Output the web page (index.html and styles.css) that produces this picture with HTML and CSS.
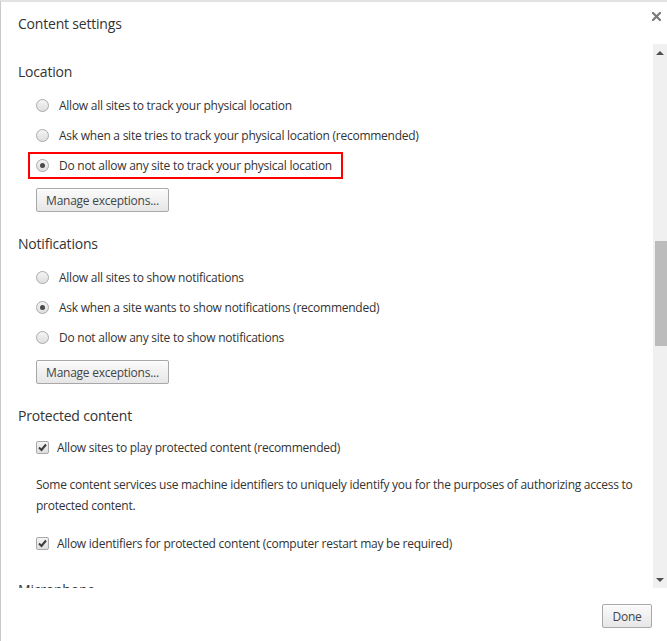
FILE: index.html
```html
<!DOCTYPE html>
<html lang="en">

<head>
    <meta charset="UTF-8">
    <meta name="viewport" content="width=device-width, initial-scale=1.0">
    <title>Content settings</title>

    <link rel="stylesheet" href="styles.css">
</head>

<body>
    <div class="dialog">
        <header class="dialog-head">
            <h1 class="dialog-title">Content settings</h1>
            <button class="close" type="button" aria-label="Close">
                <svg width="9" height="9" viewBox="0 0 9 9">
                    <path d="M1 1 L8 8 M8 1 L1 8" stroke="#7a7a7a" stroke-width="2.2" stroke-linecap="square" />
                </svg>
            </button>
        </header>

        <div class="scroller">
            <div class="content">
                <section class="group">
                    <h2>Location</h2>
                    <div class="option">
                        <span class="radio"></span>
                        <span>Allow all sites to track your physical location</span>
                    </div>
                    <div class="option">
                        <span class="radio"></span>
                        <span>Ask when a site tries to track your physical location (recommended)</span>
                    </div>
                    <div class="option">
                        <span class="highlight">
                            <span class="radio checked"></span>
                            <span>Do not allow any site to track your physical location</span>
                        </span>
                    </div>
                    <button class="btn manage" type="button">Manage exceptions...</button>
                </section>

                <section class="group">
                    <h2>Notifications</h2>
                    <div class="option">
                        <span class="radio"></span>
                        <span>Allow all sites to show notifications</span>
                    </div>
                    <div class="option">
                        <span class="radio checked"></span>
                        <span>Ask when a site wants to show notifications (recommended)</span>
                    </div>
                    <div class="option">
                        <span class="radio"></span>
                        <span>Do not allow any site to show notifications</span>
                    </div>
                    <button class="btn manage" type="button">Manage exceptions...</button>
                </section>

                <section class="group checks">
                    <h2>Protected content</h2>
                    <div class="option">
                        <span class="check">
                            <svg width="11" height="11" viewBox="0 0 11 11">
                                <path d="M2 5.5 L4.5 8 L9 2.5" fill="none" stroke="#3c3c3c" stroke-width="2" />
                            </svg>
                        </span>
                        <span>Allow sites to play protected content (recommended)</span>
                    </div>
                    <p class="note">Some content services use machine identifiers to uniquely identify you for the purposes of authorizing access to protected content.</p>
                    <div class="option">
                        <span class="check">
                            <svg width="11" height="11" viewBox="0 0 11 11">
                                <path d="M2 5.5 L4.5 8 L9 2.5" fill="none" stroke="#3c3c3c" stroke-width="2" />
                            </svg>
                        </span>
                        <span>Allow identifiers for protected content (computer restart may be required)</span>
                    </div>
                </section>

                <section class="group">
                    <h2>Microphone</h2>
                </section>
            </div>

            <div class="scrollbar">
                <div class="arrow"><span class="tri up"></span></div>
                <div class="track">
                    <div class="thumb"></div>
                </div>
                <div class="arrow"><span class="tri down"></span></div>
            </div>
        </div>

        <footer class="dialog-foot">
            <button class="btn done" type="button">Done</button>
        </footer>
    </div>
</body>

</html>
```

FILE: styles.css
```css
html,
body {
    margin: 0;
    height: 100%;
}

body {
    font-family: "Open Sans", "Noto Sans", sans-serif;
    font-size: 12px;
    letter-spacing: -0.25px;
    color: #333;
    background: #fff;
    overflow: hidden;
}

.dialog {
    height: 100%;
    box-sizing: border-box;
    border-top: 2px solid #e2e2e2;
    border-left: 1px solid #c9c9c9;
    display: flex;
    flex-direction: column;
}

/* Header */

.dialog-head {
    height: 42px;
    flex-shrink: 0;
    display: flex;
    justify-content: space-between;
    align-items: flex-start;
    padding-left: 17px;
}

.dialog-title {
    margin: 0;
    padding-top: 12px;
    font-size: 14px;
    font-weight: normal;
    line-height: 20px;
    letter-spacing: -0.2px;
    color: #333;
}

.close {
    margin: 10px 6px 0 0;
    padding: 0;
    border: none;
    background: none;
    width: 9px;
    height: 9px;
    display: flex;
}

/* Scrolling area */

.scroller {
    height: 544px;
    flex-shrink: 0;
    display: flex;
}

.content {
    flex: 1;
    overflow: hidden;
    padding: 18px 0 0 17px;
}

.group {
    margin-bottom: 22px;
}

.group h2 {
    margin: 0 0 8px;
    font-size: 14px;
    font-weight: normal;
    line-height: 20px;
    letter-spacing: -0.2px;
    color: #333;
}

.checks h2 {
    margin-bottom: 6px;
}

.option {
    height: 30px;
    display: flex;
    align-items: center;
    padding-left: 18px;
}

.highlight {
    height: 27px;
    box-sizing: border-box;
    display: inline-flex;
    align-items: center;
    border: 2px solid #f00;
    margin-left: -8px;
    padding: 0 9px 0 6px;
}

.radio {
    width: 13px;
    height: 13px;
    box-sizing: border-box;
    border: 1px solid #a9a9a9;
    border-radius: 50%;
    background: linear-gradient(#f4f4f4, #dedede);
    margin-right: 10px;
    display: flex;
    align-items: center;
    justify-content: center;
    flex-shrink: 0;
}

.radio.checked::after {
    content: "";
    width: 5px;
    height: 5px;
    border-radius: 50%;
    background: #4a4a4a;
}

.check {
    width: 13px;
    height: 13px;
    box-sizing: border-box;
    border: 1px solid #a9a9a9;
    border-radius: 2px;
    background: linear-gradient(#f4f4f4, #dedede);
    margin-right: 8px;
    display: flex;
    align-items: center;
    justify-content: center;
    flex-shrink: 0;
}

.note {
    margin: 12px 0 12px 18px;
    padding-right: 20px;
    line-height: 21px;
}

/* Buttons */

.btn {
    font-family: inherit;
    font-size: 12px;
    letter-spacing: -0.25px;
    color: #444;
    height: 24px;
    padding: 0 10px;
    white-space: nowrap;
    border: 1px solid #a8a8a8;
    border-radius: 2px;
    background: linear-gradient(#fbfbfb, #e6e6e6);
    box-shadow: inset 0 1px 0 #fff;
}

.manage {
    display: block;
    margin: 8px 0 0 18px;
    width: 133px;
    padding: 0;
}

/* Fake scrollbar */

.scrollbar {
    width: 14px;
    background: #f0f0f0;
    display: flex;
    flex-direction: column;
}

.arrow {
    height: 17px;
    display: flex;
    align-items: center;
    justify-content: center;
}

.tri {
    width: 0;
    height: 0;
    border-left: 4px solid transparent;
    border-right: 4px solid transparent;
}

.tri.up {
    border-bottom: 4px solid #505050;
}

.tri.down {
    border-top: 4px solid #505050;
}

.track {
    flex: 1;
}

.thumb {
    margin: 180px 0 0 2px;
    height: 105px;
    background: #bcbcbc;
}

/* Footer */

.dialog-foot {
    flex: 1;
    display: flex;
    justify-content: flex-end;
    align-items: flex-start;
    padding: 16px 15px 0 0;
}

.done {
    width: 50px;
    padding: 0;
}
```
